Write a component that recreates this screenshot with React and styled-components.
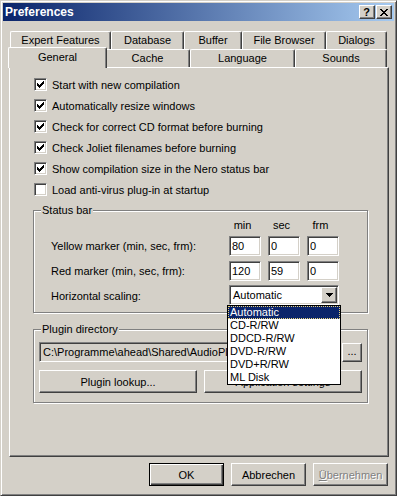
import React from 'react';
import styled, { createGlobalStyle } from 'styled-components';

const face = '#d4d0c8';

const GlobalStyle = createGlobalStyle`
  html, body {
    margin: 0;
    padding: 0;
    background: ${face};
  }
  body {
    font-family: "Liberation Sans", Arial, sans-serif;
    font-size: 11px;
    color: #000;
  }
  * {
    box-sizing: border-box;
  }
`;

const Window = styled.div`
  width: 397px;
  height: 496px;
  background: ${face};
  border: 1px solid;
  border-color: ${face} #404040 #404040 ${face};
  box-shadow: inset 1px 1px #fff, inset -1px -1px #808080;
  padding: 2px;
  display: flex;
  flex-direction: column;
`;

const TitleBar = styled.div`
  height: 18px;
  flex: none;
  display: flex;
  align-items: center;
  padding: 0 2px;
  background: linear-gradient(to right, #0a246a, #a6caf0);
`;

const Title = styled.span`
  color: #fff;
  font-weight: bold;
  font-size: 12px;
`;

const CaptionButtons = styled.div`
  margin-left: auto;
  display: flex;
  gap: 1px;
`;

const CaptionButton = styled.div`
  width: 16px;
  height: 14px;
  display: flex;
  align-items: center;
  justify-content: center;
  background: ${face};
  border: 1px solid;
  border-color: #fff #404040 #404040 #fff;
  box-shadow: inset -1px -1px #808080;
  font-weight: bold;
  font-size: 11px;
  line-height: 12px;
  padding-right: 1px;
`;

const Body = styled.div`
  flex: 1;
  display: flex;
  flex-direction: column;
  padding: 10px 5px 0 6px;
`;

const TabRow = styled.div`
  display: flex;
  height: 18px;
  padding-left: 1px;
  position: relative;
  z-index: ${p => (p.$front ? 2 : 1)};
`;

const Tab = styled.div`
  position: relative;
  flex: none;
  width: ${p => p.$w + (p.$active ? 4 : 0)}px;
  height: ${p => (p.$active ? 21 : 18)}px;
  margin: ${p => (p.$active ? '-2px -2px 0' : '0')};
  z-index: ${p => (p.$active ? 3 : 1)};
  display: flex;
  align-items: center;
  justify-content: center;
  padding-bottom: ${p => (p.$active ? 3 : 1)}px;
  background: ${face};
  border-top: 1px solid #fff;
  border-left: 1px solid #fff;
  border-right: 1px solid #404040;
  border-radius: 2px 2px 0 0;
  box-shadow: inset -1px 0 #808080;
  white-space: nowrap;
`;

const Panel = styled.div`
  height: 390px;
  flex: none;
  background: ${face};
  border: 1px solid;
  border-color: #fff #404040 #404040 #fff;
  box-shadow: inset -1px -1px #808080;
  padding: 6px 20px 0 23px;
`;

const CheckRow = styled.label`
  display: flex;
  align-items: center;
  height: 21px;
  padding-left: 1px;
  gap: 5px;
`;

const Box = styled.span`
  position: relative;
  flex: none;
  width: 13px;
  height: 13px;
  background: #fff;
  border: 1px solid;
  border-color: #808080 #fff #fff #808080;
  box-shadow: inset 1px 1px #404040, inset -1px -1px ${face};

  svg {
    position: absolute;
    left: 0;
    top: 0;
  }
`;

const Group = styled.div`
  position: relative;
  margin-top: ${p => p.$gap}px;
  border: 1px solid #808080;
  box-shadow: inset 1px 1px #fff, 1px 1px #fff;
`;

const GroupLabel = styled.span`
  position: absolute;
  top: -7px;
  left: 7px;
  padding: 0 1px;
  line-height: 13px;
  background: ${face};
`;

const MarkerGrid = styled.div`
  display: grid;
  grid-template-columns: 1fr 32px 32px 32px;
  grid-template-rows: 12px 20px 20px 20px;
  column-gap: 7px;
  row-gap: 5px;
  padding: 8px 28px 6px 17px;
`;

const ColHead = styled.span`
  text-align: center;
  padding-right: 5px;
  line-height: 12px;
`;

const FieldLabel = styled.span`
  grid-column: 1;
  align-self: center;
  white-space: nowrap;
`;

const Sunken = styled.div`
  height: 20px;
  border: 1px solid;
  border-color: #808080 #fff #fff #808080;
  box-shadow: inset 1px 1px #404040, inset -1px -1px ${face};
`;

const TextField = styled.input`
  width: 32px;
  height: 20px;
  margin: 0;
  padding: 0 2px;
  font: inherit;
  color: #000;
  background: #fff;
  border: 1px solid;
  border-color: #808080 #fff #fff #808080;
  box-shadow: inset 1px 1px #404040, inset -1px -1px ${face};
  outline: none;
`;

const Combo = styled(Sunken)`
  grid-column: 2 / span 3;
  position: relative;
  margin-top: -1px;
  display: flex;
  align-items: center;
  padding: 1px;
  background: #fff;
`;

const ComboText = styled.span`
  flex: 1;
  padding-left: 2px;
`;

const RaisedBox = styled.div`
  background: ${face};
  border: 1px solid;
  border-color: #fff #404040 #404040 #fff;
  box-shadow: inset -1px -1px #808080;
  display: flex;
  align-items: center;
  justify-content: center;
`;

const ComboButton = styled(RaisedBox)`
  width: 16px;
  height: 16px;
  flex: none;
`;

const DropList = styled.ul`
  position: absolute;
  top: calc(100% + 1px);
  left: -3px;
  right: -3px;
  z-index: 10;
  margin: 0;
  padding: 0;
  list-style: none;
  background: #fff;
  border: 1px solid #000;
`;

const DropItem = styled.li`
  height: 13px;
  line-height: 13px;
  padding-left: 2px;
  white-space: nowrap;
  background: ${p => (p.$selected ? '#0a246a' : '#fff')};
  color: ${p => (p.$selected ? '#fff' : '#000')};
  outline: ${p => (p.$selected ? '1px dotted #e8d27c' : 'none')};
  outline-offset: -1px;
`;

const PluginBody = styled.div`
  display: flex;
  flex-direction: column;
  gap: 8px;
  padding: 12px 5px 9px 5px;
`;

const PathRow = styled.div`
  display: flex;
  gap: 5px;
  align-items: center;
`;

const PathField = styled(Sunken)`
  flex: 1;
  overflow: hidden;
  white-space: nowrap;
  line-height: 18px;
  padding: 0 3px;
  background: ${face};
`;

const BrowseButton = styled(RaisedBox)`
  width: 20px;
  height: 19px;
  padding-bottom: 2px;
`;

const ButtonRow = styled.div`
  display: flex;
  gap: 7px;
`;

const Button = styled.button`
  flex: ${p => (p.$fill ? 1 : 'none')};
  width: ${p => (p.$fill ? 'auto' : '75px')};
  height: 23px;
  margin: 0;
  padding: 0;
  font: inherit;
  color: ${p => (p.disabled ? '#808080' : '#000')};
  text-shadow: ${p => (p.disabled ? '1px 1px #fff' : 'none')};
  background: ${face};
  border: 1px solid;
  border-color: ${p => (p.$default ? '#000' : '#fff #404040 #404040 #fff')};
  box-shadow: ${p =>
    p.$default
      ? 'inset 1px 1px #fff, inset -1px -1px #404040, inset -2px -2px #808080'
      : 'inset -1px -1px #808080'};
`;

const DialogButtons = styled.div`
  display: flex;
  justify-content: flex-end;
  gap: 7px;
  margin-top: 6px;
  padding-right: 1px;
`;

const checkPath = [2, 3, 4, 3, 2, 1, 0]
  .map((r, i) => `M${2 + i} ${r + 2}h1v3h-1z`)
  .join('');

const closePath = [0, 1, 2, 3, 2, 1, 0]
  .map((a, y) => `M${a} ${y}h2v1h-2zM${6 - a} ${y}h2v1h-2z`)
  .join('');

const arrowPath = [0, 1, 2, 3]
  .map(y => `M${y} ${y}h${7 - 2 * y}v1h-${7 - 2 * y}z`)
  .join('');

const backTabs = [
  ['Expert Features', 101],
  ['Database', 73],
  ['Buffer', 58],
  ['File Browser', 84],
  ['Dialogs', 61],
];

const frontTabs = [
  ['General', 95],
  ['Cache', 85],
  ['Language', 105],
  ['Sounds', 92],
];

const options = [
  ['Start with new compilation', true],
  ['Automatically resize windows', true],
  ['Check for correct CD format before burning', true],
  ['Check Joliet filenames before burning', true],
  ['Show compilation size in the Nero status bar', true],
  ['Load anti-virus plug-in at startup', false],
];

const scalings = ['Automatic', 'CD-R/RW', 'DDCD-R/RW', 'DVD-R/RW', 'DVD+R/RW', 'ML Disk'];

const CheckBox = ({ checked }) => (
  <Box>
    {checked && (
      <svg width="11" height="11" shapeRendering="crispEdges">
        <path d={checkPath} fill="#000" />
      </svg>
    )}
  </Box>
);

export default function App() {
  return (
    <>
      <GlobalStyle />
      <Window>
        <TitleBar>
          <Title>Preferences</Title>
          <CaptionButtons>
            <CaptionButton>?</CaptionButton>
            <CaptionButton>
              <svg width="8" height="7" shapeRendering="crispEdges">
                <path d={closePath} fill="#000" />
              </svg>
            </CaptionButton>
          </CaptionButtons>
        </TitleBar>

        <Body>
          <TabRow>
            {backTabs.map(([name, w]) => (
              <Tab key={name} $w={w}>{name}</Tab>
            ))}
          </TabRow>
          <TabRow $front>
            {frontTabs.map(([name, w], i) => (
              <Tab key={name} $w={w} $active={i === 0}>{name}</Tab>
            ))}
          </TabRow>

          <Panel>
            {options.map(([text, checked]) => (
              <CheckRow key={text}>
                <CheckBox checked={checked} />
                <span>{text}</span>
              </CheckRow>
            ))}

            <Group $gap={10}>
              <GroupLabel>Status bar</GroupLabel>
              <MarkerGrid>
                <span />
                <ColHead>min</ColHead>
                <ColHead>sec</ColHead>
                <ColHead>frm</ColHead>

                <FieldLabel>Yellow marker (min, sec, frm):</FieldLabel>
                <TextField defaultValue="80" />
                <TextField defaultValue="0" />
                <TextField defaultValue="0" />

                <FieldLabel>Red marker (min, sec, frm):</FieldLabel>
                <TextField defaultValue="120" />
                <TextField defaultValue="59" />
                <TextField defaultValue="0" />

                <FieldLabel>Horizontal scaling:</FieldLabel>
                <Combo>
                  <ComboText>Automatic</ComboText>
                  <ComboButton>
                    <svg width="7" height="4" shapeRendering="crispEdges">
                      <path d={arrowPath} fill="#000" />
                    </svg>
                  </ComboButton>
                  <DropList>
                    {scalings.map((s, i) => (
                      <DropItem key={s} $selected={i === 0}>{s}</DropItem>
                    ))}
                  </DropList>
                </Combo>
              </MarkerGrid>
            </Group>

            <Group $gap={16}>
              <GroupLabel>Plugin directory</GroupLabel>
              <PluginBody>
                <PathRow>
                  <PathField>C:\Programme\ahead\Shared\AudioPlugins</PathField>
                  <BrowseButton>...</BrowseButton>
                </PathRow>
                <ButtonRow>
                  <Button $fill>Plugin lookup...</Button>
                  <Button $fill>Application settings</Button>
                </ButtonRow>
              </PluginBody>
            </Group>
          </Panel>

          <DialogButtons>
            <Button $default>OK</Button>
            <Button>Abbrechen</Button>
            <Button disabled>
              <u>Ü</u>bernehmen
            </Button>
          </DialogButtons>
        </Body>
      </Window>
    </>
  );
}
